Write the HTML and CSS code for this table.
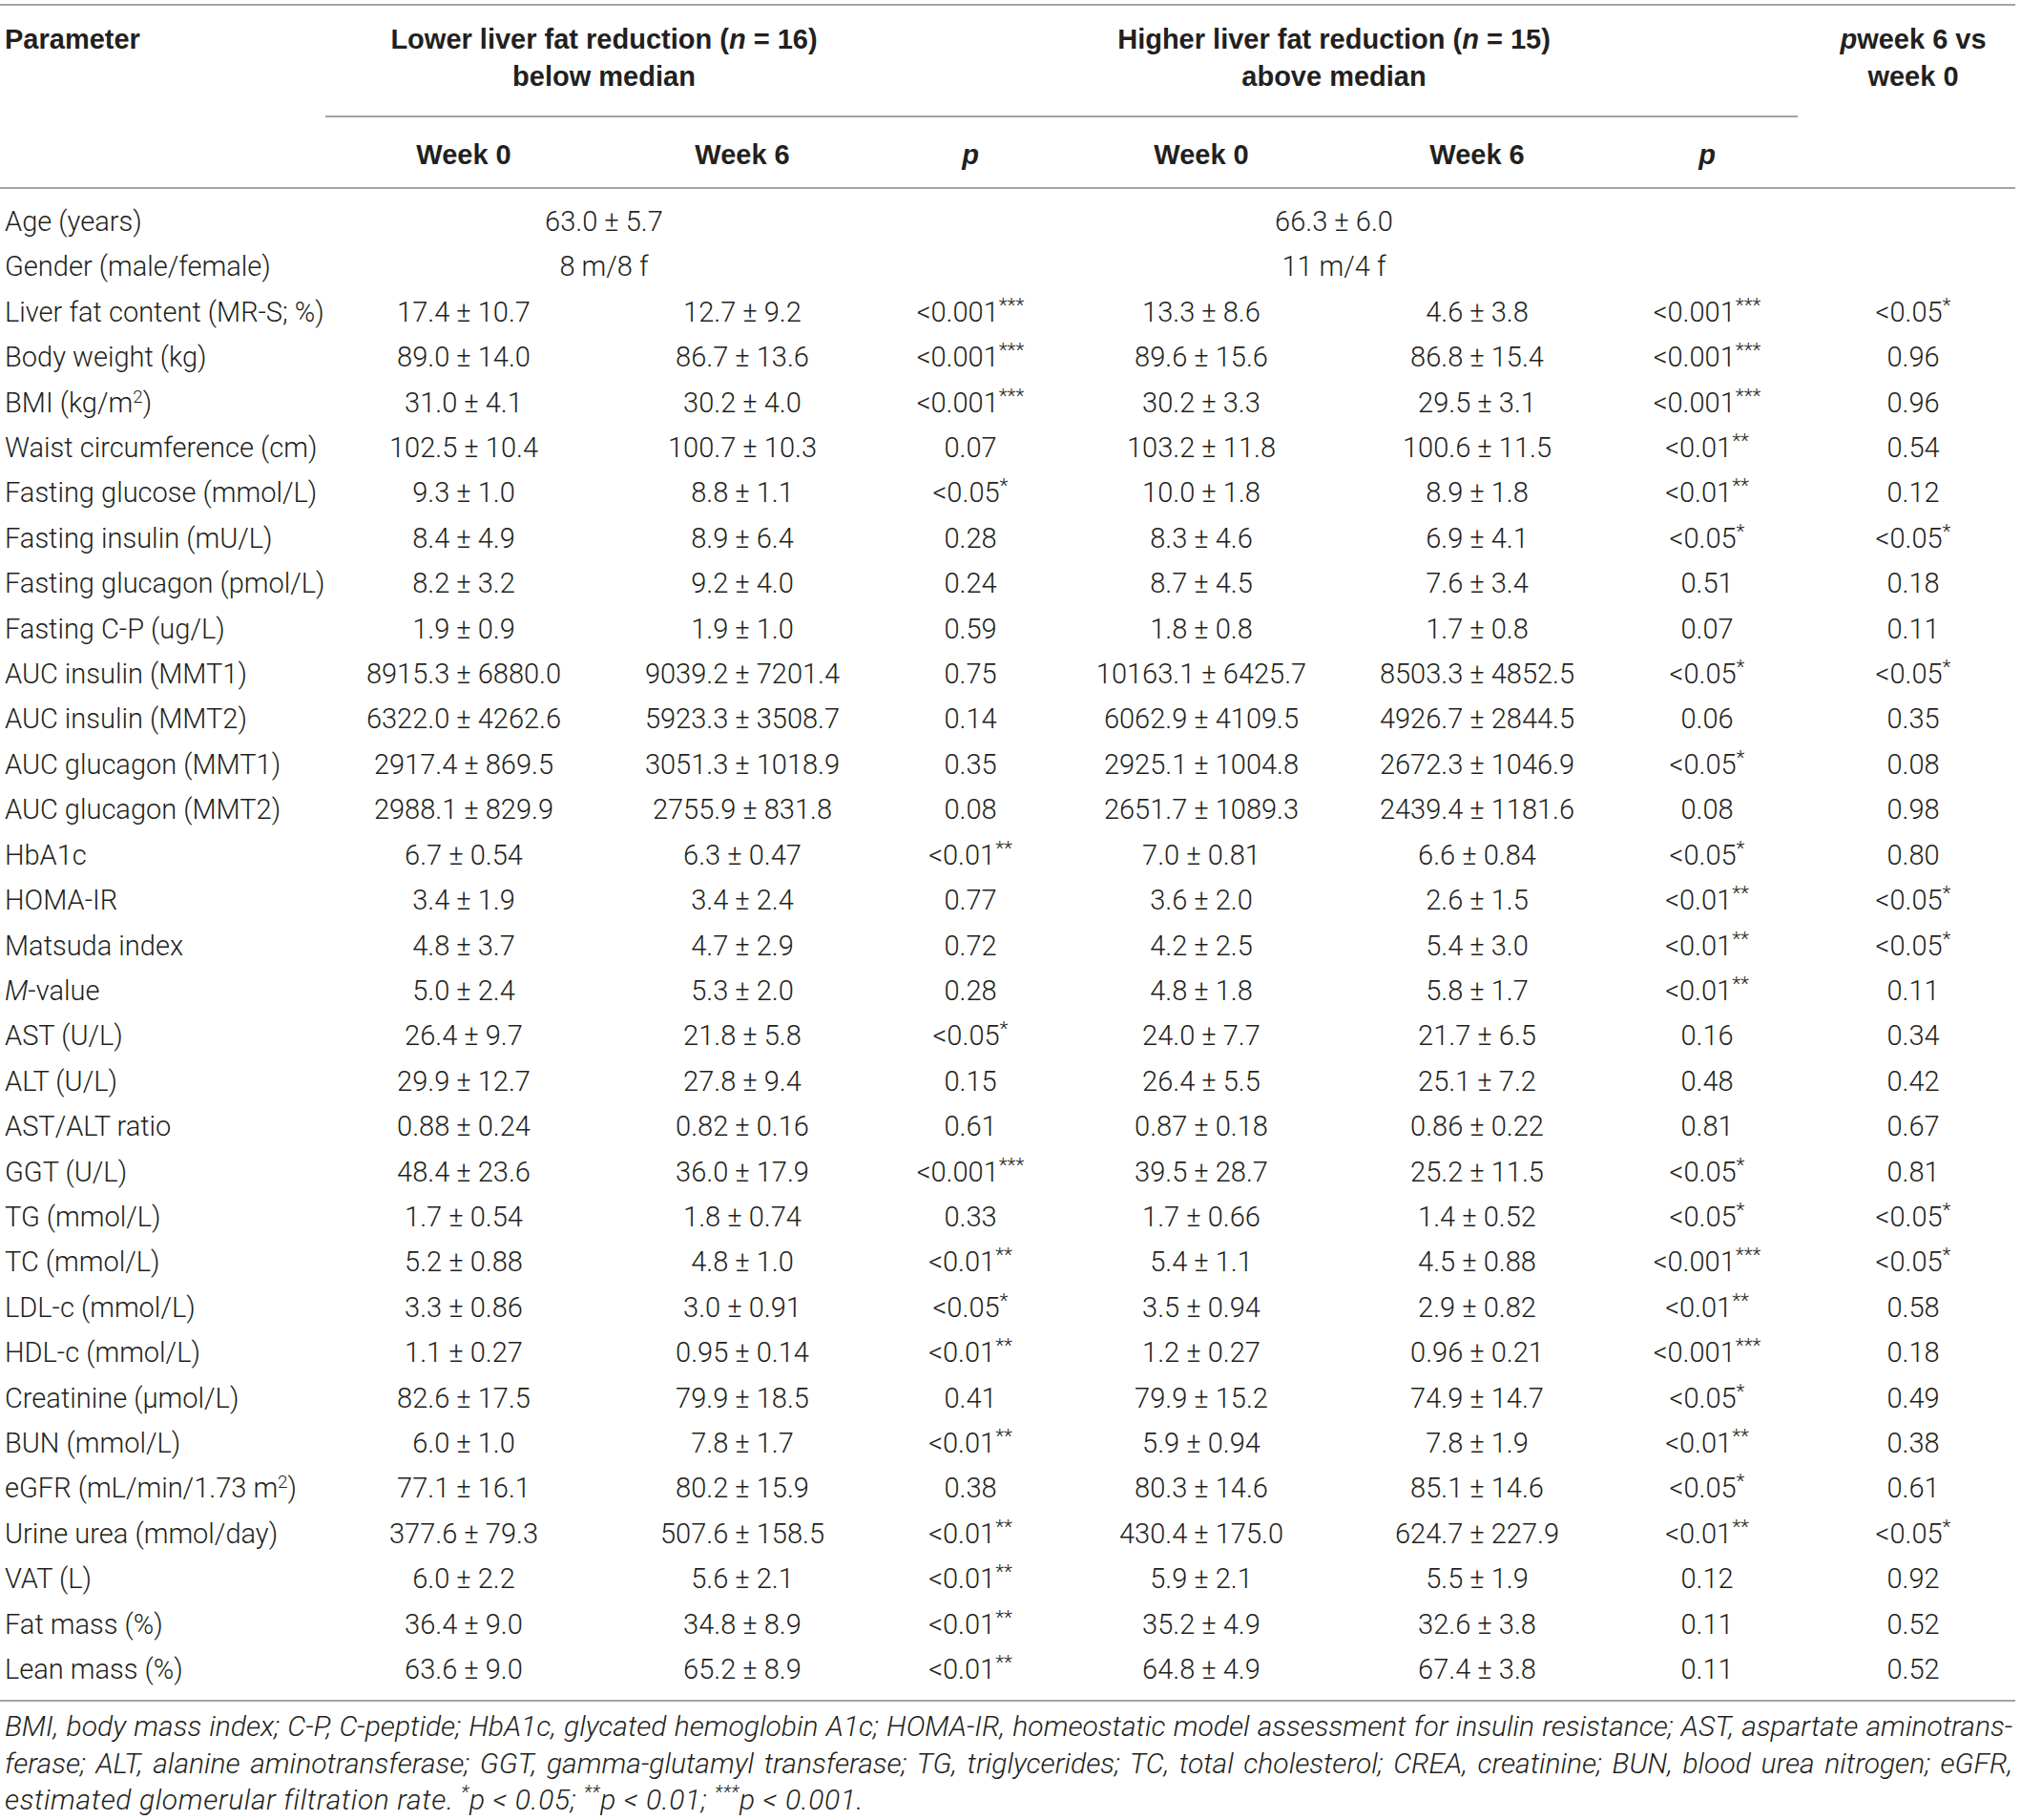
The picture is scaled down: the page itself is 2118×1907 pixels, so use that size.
FILE: index.html
```html
<!DOCTYPE html>
<html lang="en">
<head>
<meta charset="utf-8">
<title>Table</title>
<link rel="stylesheet" href="styles.css">
</head>
<body>
<table class="tbl">
<colgroup>
<col class="c-param"><col class="c-w0"><col class="c-w6"><col class="c-p"><col class="c-w0h"><col class="c-w6h"><col class="c-ph"><col class="c-last">
</colgroup>
<thead>
<tr class="h1">
<th class="param" rowspan="2">Parameter</th>
<th class="grp" colspan="2">Lower liver fat reduction (<i>n</i> = 16)<br>below median</th>
<th class="grp"></th>
<th class="grp" colspan="2">Higher liver fat reduction (<i>n</i> = 15)<br>above median</th>
<th class="grp ph"></th>
<th class="last" rowspan="2"><i>p</i>week 6 vs<br>week 0</th>
</tr>
<tr class="h2">
<th>Week 0</th><th>Week 6</th><th><i>p</i></th><th>Week 0</th><th>Week 6</th><th class="ph"><i>p</i></th>
</tr>
</thead>
<tbody>
<tr class="first"><td>Age (years)</td><td colspan="2">63.0 ± 5.7</td><td></td><td colspan="2">66.3 ± 6.0</td><td class="ph"></td><td class="last"></td></tr>
<tr><td>Gender (male/female)</td><td colspan="2">8 m/8 f</td><td></td><td colspan="2">11 m/4 f</td><td class="ph"></td><td class="last"></td></tr>
<tr><td>Liver fat content (MR-S; %)</td><td>17.4 ± 10.7</td><td>12.7 ± 9.2</td><td>&lt;0.001<sup>***</sup></td><td>13.3 ± 8.6</td><td>4.6 ± 3.8</td><td class="ph">&lt;0.001<sup>***</sup></td><td class="last">&lt;0.05<sup>*</sup></td></tr>
<tr><td>Body weight (kg)</td><td>89.0 ± 14.0</td><td>86.7 ± 13.6</td><td>&lt;0.001<sup>***</sup></td><td>89.6 ± 15.6</td><td>86.8 ± 15.4</td><td class="ph">&lt;0.001<sup>***</sup></td><td class="last">0.96</td></tr>
<tr><td>BMI (kg/m<sup class="exp">2</sup>)</td><td>31.0 ± 4.1</td><td>30.2 ± 4.0</td><td>&lt;0.001<sup>***</sup></td><td>30.2 ± 3.3</td><td>29.5 ± 3.1</td><td class="ph">&lt;0.001<sup>***</sup></td><td class="last">0.96</td></tr>
<tr><td>Waist circumference (cm)</td><td>102.5 ± 10.4</td><td>100.7 ± 10.3</td><td>0.07</td><td>103.2 ± 11.8</td><td>100.6 ± 11.5</td><td class="ph">&lt;0.01<sup>**</sup></td><td class="last">0.54</td></tr>
<tr><td>Fasting glucose (mmol/L)</td><td>9.3 ± 1.0</td><td>8.8 ± 1.1</td><td>&lt;0.05<sup>*</sup></td><td>10.0 ± 1.8</td><td>8.9 ± 1.8</td><td class="ph">&lt;0.01<sup>**</sup></td><td class="last">0.12</td></tr>
<tr><td>Fasting insulin (mU/L)</td><td>8.4 ± 4.9</td><td>8.9 ± 6.4</td><td>0.28</td><td>8.3 ± 4.6</td><td>6.9 ± 4.1</td><td class="ph">&lt;0.05<sup>*</sup></td><td class="last">&lt;0.05<sup>*</sup></td></tr>
<tr><td>Fasting glucagon (pmol/L)</td><td>8.2 ± 3.2</td><td>9.2 ± 4.0</td><td>0.24</td><td>8.7 ± 4.5</td><td>7.6 ± 3.4</td><td class="ph">0.51</td><td class="last">0.18</td></tr>
<tr><td>Fasting C-P (ug/L)</td><td>1.9 ± 0.9</td><td>1.9 ± 1.0</td><td>0.59</td><td>1.8 ± 0.8</td><td>1.7 ± 0.8</td><td class="ph">0.07</td><td class="last">0.11</td></tr>
<tr><td>AUC insulin (MMT1)</td><td>8915.3 ± 6880.0</td><td>9039.2 ± 7201.4</td><td>0.75</td><td>10163.1 ± 6425.7</td><td>8503.3 ± 4852.5</td><td class="ph">&lt;0.05<sup>*</sup></td><td class="last">&lt;0.05<sup>*</sup></td></tr>
<tr><td>AUC insulin (MMT2)</td><td>6322.0 ± 4262.6</td><td>5923.3 ± 3508.7</td><td>0.14</td><td>6062.9 ± 4109.5</td><td>4926.7 ± 2844.5</td><td class="ph">0.06</td><td class="last">0.35</td></tr>
<tr><td>AUC glucagon (MMT1)</td><td>2917.4 ± 869.5</td><td>3051.3 ± 1018.9</td><td>0.35</td><td>2925.1 ± 1004.8</td><td>2672.3 ± 1046.9</td><td class="ph">&lt;0.05<sup>*</sup></td><td class="last">0.08</td></tr>
<tr><td>AUC glucagon (MMT2)</td><td>2988.1 ± 829.9</td><td>2755.9 ± 831.8</td><td>0.08</td><td>2651.7 ± 1089.3</td><td>2439.4 ± 1181.6</td><td class="ph">0.08</td><td class="last">0.98</td></tr>
<tr><td>HbA1c</td><td>6.7 ± 0.54</td><td>6.3 ± 0.47</td><td>&lt;0.01<sup>**</sup></td><td>7.0 ± 0.81</td><td>6.6 ± 0.84</td><td class="ph">&lt;0.05<sup>*</sup></td><td class="last">0.80</td></tr>
<tr><td>HOMA-IR</td><td>3.4 ± 1.9</td><td>3.4 ± 2.4</td><td>0.77</td><td>3.6 ± 2.0</td><td>2.6 ± 1.5</td><td class="ph">&lt;0.01<sup>**</sup></td><td class="last">&lt;0.05<sup>*</sup></td></tr>
<tr><td>Matsuda index</td><td>4.8 ± 3.7</td><td>4.7 ± 2.9</td><td>0.72</td><td>4.2 ± 2.5</td><td>5.4 ± 3.0</td><td class="ph">&lt;0.01<sup>**</sup></td><td class="last">&lt;0.05<sup>*</sup></td></tr>
<tr><td><i>M</i>-value</td><td>5.0 ± 2.4</td><td>5.3 ± 2.0</td><td>0.28</td><td>4.8 ± 1.8</td><td>5.8 ± 1.7</td><td class="ph">&lt;0.01<sup>**</sup></td><td class="last">0.11</td></tr>
<tr><td>AST (U/L)</td><td>26.4 ± 9.7</td><td>21.8 ± 5.8</td><td>&lt;0.05<sup>*</sup></td><td>24.0 ± 7.7</td><td>21.7 ± 6.5</td><td class="ph">0.16</td><td class="last">0.34</td></tr>
<tr><td>ALT (U/L)</td><td>29.9 ± 12.7</td><td>27.8 ± 9.4</td><td>0.15</td><td>26.4 ± 5.5</td><td>25.1 ± 7.2</td><td class="ph">0.48</td><td class="last">0.42</td></tr>
<tr><td>AST/ALT ratio</td><td>0.88 ± 0.24</td><td>0.82 ± 0.16</td><td>0.61</td><td>0.87 ± 0.18</td><td>0.86 ± 0.22</td><td class="ph">0.81</td><td class="last">0.67</td></tr>
<tr><td>GGT (U/L)</td><td>48.4 ± 23.6</td><td>36.0 ± 17.9</td><td>&lt;0.001<sup>***</sup></td><td>39.5 ± 28.7</td><td>25.2 ± 11.5</td><td class="ph">&lt;0.05<sup>*</sup></td><td class="last">0.81</td></tr>
<tr><td>TG (mmol/L)</td><td>1.7 ± 0.54</td><td>1.8 ± 0.74</td><td>0.33</td><td>1.7 ± 0.66</td><td>1.4 ± 0.52</td><td class="ph">&lt;0.05<sup>*</sup></td><td class="last">&lt;0.05<sup>*</sup></td></tr>
<tr><td>TC (mmol/L)</td><td>5.2 ± 0.88</td><td>4.8 ± 1.0</td><td>&lt;0.01<sup>**</sup></td><td>5.4 ± 1.1</td><td>4.5 ± 0.88</td><td class="ph">&lt;0.001<sup>***</sup></td><td class="last">&lt;0.05<sup>*</sup></td></tr>
<tr><td>LDL-c (mmol/L)</td><td>3.3 ± 0.86</td><td>3.0 ± 0.91</td><td>&lt;0.05<sup>*</sup></td><td>3.5 ± 0.94</td><td>2.9 ± 0.82</td><td class="ph">&lt;0.01<sup>**</sup></td><td class="last">0.58</td></tr>
<tr><td>HDL-c (mmol/L)</td><td>1.1 ± 0.27</td><td>0.95 ± 0.14</td><td>&lt;0.01<sup>**</sup></td><td>1.2 ± 0.27</td><td>0.96 ± 0.21</td><td class="ph">&lt;0.001<sup>***</sup></td><td class="last">0.18</td></tr>
<tr><td>Creatinine (μmol/L)</td><td>82.6 ± 17.5</td><td>79.9 ± 18.5</td><td>0.41</td><td>79.9 ± 15.2</td><td>74.9 ± 14.7</td><td class="ph">&lt;0.05<sup>*</sup></td><td class="last">0.49</td></tr>
<tr><td>BUN (mmol/L)</td><td>6.0 ± 1.0</td><td>7.8 ± 1.7</td><td>&lt;0.01<sup>**</sup></td><td>5.9 ± 0.94</td><td>7.8 ± 1.9</td><td class="ph">&lt;0.01<sup>**</sup></td><td class="last">0.38</td></tr>
<tr><td>eGFR (mL/min/1.73 m<sup class="exp">2</sup>)</td><td>77.1 ± 16.1</td><td>80.2 ± 15.9</td><td>0.38</td><td>80.3 ± 14.6</td><td>85.1 ± 14.6</td><td class="ph">&lt;0.05<sup>*</sup></td><td class="last">0.61</td></tr>
<tr><td>Urine urea (mmol/day)</td><td>377.6 ± 79.3</td><td>507.6 ± 158.5</td><td>&lt;0.01<sup>**</sup></td><td>430.4 ± 175.0</td><td>624.7 ± 227.9</td><td class="ph">&lt;0.01<sup>**</sup></td><td class="last">&lt;0.05<sup>*</sup></td></tr>
<tr><td>VAT (L)</td><td>6.0 ± 2.2</td><td>5.6 ± 2.1</td><td>&lt;0.01<sup>**</sup></td><td>5.9 ± 2.1</td><td>5.5 ± 1.9</td><td class="ph">0.12</td><td class="last">0.92</td></tr>
<tr><td>Fat mass (%)</td><td>36.4 ± 9.0</td><td>34.8 ± 8.9</td><td>&lt;0.01<sup>**</sup></td><td>35.2 ± 4.9</td><td>32.6 ± 3.8</td><td class="ph">0.11</td><td class="last">0.52</td></tr>
<tr class="lastrow"><td>Lean mass (%)</td><td>63.6 ± 9.0</td><td>65.2 ± 8.9</td><td>&lt;0.01<sup>**</sup></td><td>64.8 ± 4.9</td><td>67.4 ± 3.8</td><td class="ph">0.11</td><td class="last">0.52</td></tr>
</tbody>
</table>
<div class="notes">
<p class="jl">BMI, body mass index; C-P, C-peptide; HbA1c, glycated hemoglobin A1c; HOMA-IR, homeostatic model assessment for insulin resistance; AST, aspartate aminotrans-</p>
<p class="jl">ferase; ALT, alanine aminotransferase; GGT, gamma-glutamyl transferase; TG, triglycerides; TC, total cholesterol; CREA, creatinine; BUN, blood urea nitrogen; eGFR,</p>
<p class="tail">estimated glomerular filtration rate. <sup>*</sup>p &lt; 0.05; <sup>**</sup>p &lt; 0.01; <sup>***</sup>p &lt; 0.001.</p>
</div>
</body>
</html>
```
FILE: styles.css
```css
html, body {
  margin: 0;
  padding: 0;
  background: #ffffff;
}
body {
  color: #231f20;
  font-family: Roboto, "Liberation Sans", Arial, sans-serif;
  font-weight: 300;
  font-size: 29px;
  width: 2118px;
}
.tbl {
  width: 2112px;
  table-layout: fixed;
  border-collapse: separate;
  border-spacing: 0;
  margin-top: 4px;
  border-top: 2px solid #a3a3a3;
}
.c-param { width: 341px; }
.c-w0 { width: 290px; }
.c-w6 { width: 294px; }
.c-p { width: 184px; }
.c-w0h { width: 300px; }
.c-w6h { width: 278px; }
.c-ph { width: 197px; }
.c-last { width: 228px; }

.tbl th {
  font-family: "Liberation Sans", Arial, sans-serif;
  font-weight: 700;
  font-size: 29px;
  line-height: 39px;
  text-align: center;
  vertical-align: top;
  padding: 0;
}
.h1 th {
  padding-top: 16px;
  padding-bottom: 21px;
}
.h1 th.grp {
  border-bottom: 2px solid #a3a3a3;
}
.tbl th.param {
  text-align: left;
  padding-left: 5px;
  border-bottom: 2px solid #a3a3a3;
}
.tbl th.last {
  padding-left: 14px;
  border-bottom: 2px solid #a3a3a3;
}
.h2 th {
  padding-top: 19.5px;
  padding-bottom: 14.5px;
  border-bottom: 2px solid #a3a3a3;
}
.tbl .ph { padding-left: 7px; }

.tbl td {
  padding: 0;
  height: 47.4px;
  line-height: 47.4px;
  text-align: center;
  vertical-align: top;
  white-space: nowrap;
}
.tbl td:first-child {
  text-align: left;
  padding-left: 5px;
}
.tbl td.last { padding-left: 14px; }
.first td { padding-top: 11px; }
.lastrow td {
  padding-bottom: 8px;
  border-bottom: 2px solid #a3a3a3;
}
.tbl sup {
  font-size: 0.72em;
  line-height: 0;
  vertical-align: 0.5em;
}
.tbl sup.exp {
  font-size: 0.65em;
  vertical-align: 0.55em;
}
.notes {
  width: 2104px;
  padding-left: 5px;
  margin-top: 7px;
  font-style: italic;
  font-size: 30px;
  line-height: 38.5px;
}
.notes p {
  margin: 0;
  white-space: nowrap;
}
.notes p.jl {
  text-align: justify;
  text-align-last: justify;
}
.notes p.tail {
  letter-spacing: 0.6px;
}
.notes sup {
  font-size: 0.65em;
  line-height: 0;
  vertical-align: 0.55em;
}
```
